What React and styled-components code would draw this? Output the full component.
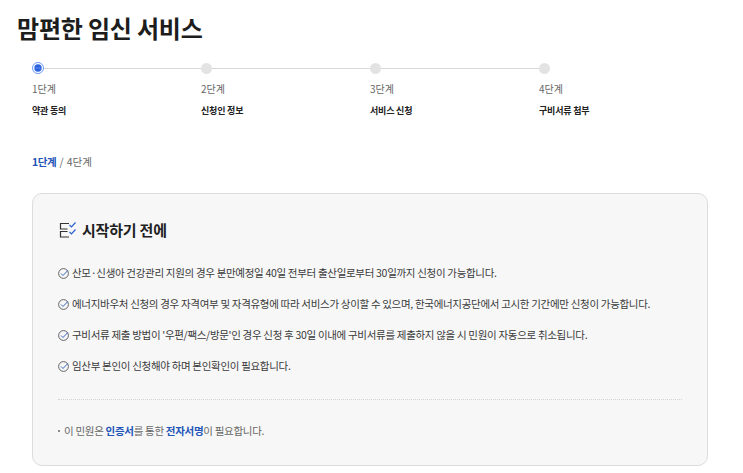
import styled, { createGlobalStyle } from 'styled-components';

const GlobalStyle = createGlobalStyle`
  html, body {
    margin: 0;
    padding: 0;
    background: #fff;
  }
  body {
    font-family: "Noto Sans CJK KR", "Noto Sans", sans-serif;
    overflow: hidden;
  }
`;

const steps = [
  { id: 1, label: '1단계', name: '약관 동의' },
  { id: 2, label: '2단계', name: '신청인 정보' },
  { id: 3, label: '3단계', name: '서비스 신청' },
  { id: 4, label: '4단계', name: '구비서류 첨부' },
];

const notices = [
  '산모·신생아 건강관리 지원의 경우 분만예정일 40일 전부터 출산일로부터 30일까지 신청이 가능합니다.',
  '에너지바우처 신청의 경우 자격여부 및 자격유형에 따라 서비스가 상이할 수 있으며, 한국에너지공단에서 고시한 기간에만 신청이 가능합니다.',
  "구비서류 제출 방법이 '우편/팩스/방문'인 경우 신청 후 30일 이내에 구비서류를 제출하지 않을 시 민원이 자동으로 취소됩니다.",
  '임산부 본인이 신청해야 하며 본인확인이 필요합니다.',
];

const ChecklistIcon = () => (
  <svg width="18" height="18" viewBox="0 0 18 18" fill="none">
    <path d="M10 2.500H1.500V8H8.500M8.500 10.500H1.500V16H10" stroke="#333" strokeWidth="1.200" />
    <path d="M10.500 4L12.500 6L16.500 1.500M10.500 11L12.500 13L16.500 8.500" stroke="#2b62d0" strokeWidth="1.200" />
  </svg>
);

const CheckCircle = () => (
  <svg width="11" height="11" viewBox="0 0 11 11" fill="none">
    <circle cx="5.500" cy="5.500" r="4.900" stroke="#555" strokeWidth="0.9" />
    <path d="M3 5.500L5 7.500L9.800 2.500" stroke="#3a66c4" strokeWidth="1" />
  </svg>
);

const ActiveDot = () => (
  <svg width="12" height="12" viewBox="0 0 12 12">
    <circle cx="6" cy="6" r="5.500" fill="#fff" stroke="#6f9af0" strokeWidth="1" />
    <circle cx="6" cy="6" r="3.700" fill="#2b62e0" />
    <path d="M3.800 6H4.600M5.600 6H6.400M7.400 6H8.200" stroke="#cfdcf8" strokeWidth="0.7" />
  </svg>
);

const App = () => (
  <Page>
    <GlobalStyle />
    <Title>맘편한 임신 서비스</Title>
    <Stepper>
      {steps.map((step, i) => (
        <Step key={step.id}>
          <Track $last={i === steps.length - 1}>
            {i === 0 ? <ActiveDot /> : <Dot />}
          </Track>
          <StepLabel>{step.label}</StepLabel>
          <StepName>{step.name}</StepName>
        </Step>
      ))}
    </Stepper>
    <Progress>
      <strong>1단계</strong> / 4단계
    </Progress>
    <Card>
      <CardTitle>
        <ChecklistIcon />
        시작하기 전에
      </CardTitle>
      <NoticeList>
        {notices.map(text => (
          <Notice key={text}>
            <CheckCircle />
            <span>{text}</span>
          </Notice>
        ))}
      </NoticeList>
      <Footnote>
        <Bullet />
        <span>
          이 민원은 <b>인증서</b>를 통한 <b>전자서명</b>이 필요합니다.
        </span>
      </Footnote>
    </Card>
  </Page>
);

const Page = styled.div`
  width: 743px;
  height: 473px;
  overflow: hidden;
  box-sizing: border-box;
  padding: 12px 35px 0 32px;
`;

const Title = styled.h1`
  margin: 0 0 0 -15px;
  font-size: 24px;
  line-height: 32px;
  font-weight: 700;
  letter-spacing: -0.2px;
  color: #1d1d1d;
`;

const Stepper = styled.div`
  display: grid;
  grid-template-columns: repeat(4, 169px);
  margin-top: 18px;
`;

const Step = styled.div`
  display: flex;
  flex-direction: column;
`;

const Track = styled.div`
  height: 12px;
  display: flex;
  align-items: center;

  svg {
    flex: none;
  }

  &::after {
    content: '';
    display: ${props => (props.$last ? 'none' : 'block')};
    flex: 1;
    height: 1px;
    background: #d8d8d8;
  }
`;

const Dot = styled.span`
  flex: none;
  width: 11px;
  height: 11px;
  border-radius: 50%;
  background: #e3e3e3;
`;

const StepLabel = styled.div`
  margin-top: 7px;
  font-size: 10px;
  line-height: 15px;
  color: #666;
`;

const StepName = styled.div`
  margin-top: 7px;
  font-size: 9px;
  line-height: 15px;
  font-weight: 700;
  letter-spacing: -0.2px;
  color: #222;
`;

const Progress = styled.div`
  margin-top: 36px;
  font-size: 10.500px;
  line-height: 16px;
  word-spacing: 1px;
  letter-spacing: -0.1px;
  color: #666;

  strong {
    color: #2255b8;
    font-weight: 700;
    letter-spacing: -0.4px;
  }
`;

const Card = styled.div`
  box-sizing: border-box;
  width: 676px;
  height: 273px;
  margin-top: 23px;
  padding: 24px 25px 0;
  background: #f7f7f7;
  border: 1px solid #dcdcdc;
  border-radius: 10px;
`;

const CardTitle = styled.h2`
  display: flex;
  align-items: center;
  gap: 5px;
  margin: 0 0 0 1px;
  font-size: 15px;
  line-height: 24px;
  font-weight: 700;
  letter-spacing: -0.2px;
  color: #222;
`;

const NoticeList = styled.ul`
  list-style: none;
  margin: 23px 0 0;
  padding: 0 0 25px;
  display: flex;
  flex-direction: column;
  gap: 15px;
  border-bottom: 1px dotted #d2d2d2;
`;

const Notice = styled.li`
  display: flex;
  align-items: center;
  gap: 3px;
  font-size: 10.500px;
  line-height: 16px;
  letter-spacing: -0.31px;
  color: #3a3a3a;
  white-space: nowrap;
`;

const Footnote = styled.div`
  display: flex;
  align-items: center;
  gap: 4px;
  margin-top: 23px;
  font-size: 10.500px;
  line-height: 16px;
  letter-spacing: -0.3px;
  color: #666;

  b {
    color: #2255b8;
    font-weight: 700;
  }
`;

const Bullet = styled.i`
  width: 2px;
  height: 2px;
  background: #666;
  border-radius: 50%;
`;

export default App;
